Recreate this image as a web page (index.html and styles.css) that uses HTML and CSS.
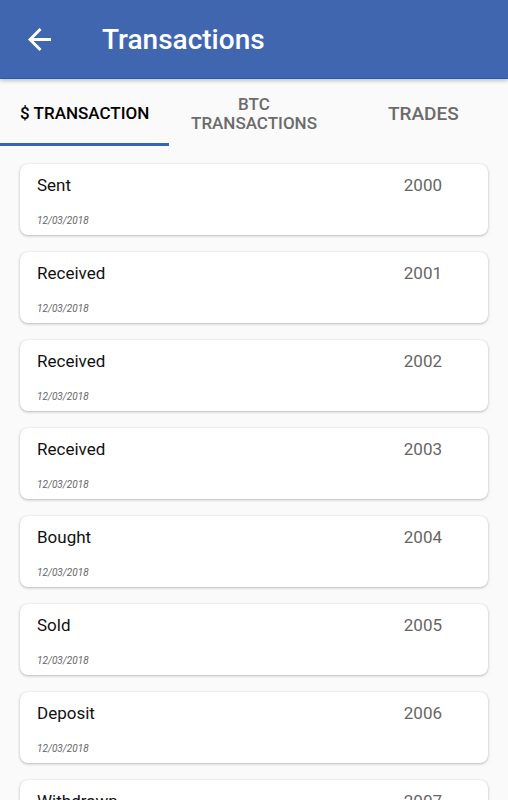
FILE: index.html
```html
<!DOCTYPE html>
<html>
<head>
<meta charset="utf-8">
<link rel="stylesheet" href="styles.css">
</head>
<body>
<header class="appbar">
  <svg class="back" viewBox="4 4 16 16" width="23" height="23"><path d="M20 11H7.83l5.59-5.59L12 4l-8 8 8 8 1.41-1.41L7.83 13H20v-2z" fill="#fff"/></svg>
  <h1 class="title">Transactions</h1>
</header>
<nav class="tabs">
  <div class="tab active"><span class="tab-label">$ TRANSACTION</span></div>
  <div class="tab"><span class="tab-label two">BTC<br>TRANSACTIONS</span></div>
  <div class="tab"><span class="tab-label big">TRADES</span></div>
</nav>
<main class="list">
  <div class="card"><div class="row"><span class="name">Sent</span><span class="amount">2000</span></div><div class="date">12/03/2018</div></div>
  <div class="card"><div class="row"><span class="name">Received</span><span class="amount">2001</span></div><div class="date">12/03/2018</div></div>
  <div class="card"><div class="row"><span class="name">Received</span><span class="amount">2002</span></div><div class="date">12/03/2018</div></div>
  <div class="card"><div class="row"><span class="name">Received</span><span class="amount">2003</span></div><div class="date">12/03/2018</div></div>
  <div class="card"><div class="row"><span class="name">Bought</span><span class="amount">2004</span></div><div class="date">12/03/2018</div></div>
  <div class="card"><div class="row"><span class="name">Sold</span><span class="amount">2005</span></div><div class="date">12/03/2018</div></div>
  <div class="card"><div class="row"><span class="name">Deposit</span><span class="amount">2006</span></div><div class="date">12/03/2018</div></div>
  <div class="card"><div class="row"><span class="name">Withdrawn</span><span class="amount">2007</span></div><div class="date">12/03/2018</div></div>
</main>
</body>
</html>
```
FILE: styles.css
```css
html, body {
  margin: 0;
  padding: 0;
  height: 100%;
  overflow: hidden;
}
body {
  background: #fafafa;
  font-family: Roboto, "Liberation Sans", sans-serif;
}
.appbar {
  position: relative;
  z-index: 2;
  height: 79px;
  box-sizing: border-box;
  background: #4166b0;
  border-bottom: 1px solid #1a5dc6;
  box-shadow: 0 2px 4px rgba(0,0,0,0.22);
  display: flex;
  align-items: center;
  padding-left: 28px;
}
.back {
  display: block;
  flex: none;
}
.title {
  margin: 2px 0 0 51px;
  color: #fff;
  font-size: 28px;
  font-weight: 500;
  line-height: 32px;
}
.tabs {
  display: flex;
  height: 67px;
}
.tab {
  flex: 1;
  display: flex;
  align-items: center;
  justify-content: center;
  box-sizing: border-box;
  padding-top: 5px;
  border-bottom: 3px solid transparent;
}
.tab.active {
  border-bottom-color: #3465ba;
}
.tab-label {
  font-size: 17px;
  font-weight: 500;
  color: #6b6b6b;
  text-align: center;
  line-height: 19px;
}
.tab.active .tab-label {
  color: #000;
}
.tab-label.two {
  font-size: 17px;
}
.tab-label.big {
  font-size: 19px;
}
.list {
  display: flex;
  flex-direction: column;
  gap: 17px;
  padding: 18px 20px;
}
.card {
  height: 71px;
  flex: none;
  box-sizing: border-box;
  background: #fff;
  border-radius: 8px;
  box-shadow: 0 1px 3px rgba(0,0,0,0.25), 0 0 1px rgba(0,0,0,0.12);
  padding: 11px 46px 0 17px;
}
.row {
  display: flex;
  justify-content: space-between;
  line-height: 20px;
}
.name {
  font-size: 17px;
  color: #111;
}
.amount {
  font-size: 17px;
  color: #666;
}
.date {
  margin-top: 20px;
  font-size: 10px;
  line-height: 12px;
  font-style: italic;
  color: #666;
}
```
